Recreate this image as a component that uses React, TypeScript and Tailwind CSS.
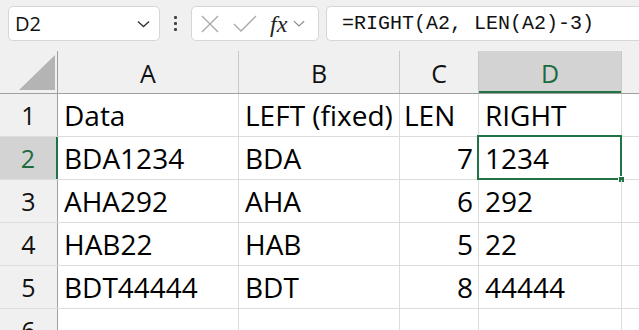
import React from 'react'

const cols = ['A', 'B', 'C', 'D']

const rows: { n: number; a: string; b: string; c: string; d: string }[] = [
  { n: 1, a: 'Data', b: 'LEFT (fixed)', c: 'LEN', d: 'RIGHT' },
  { n: 2, a: 'BDA1234', b: 'BDA', c: '7', d: '1234' },
  { n: 3, a: 'AHA292', b: 'AHA', c: '6', d: '292' },
  { n: 4, a: 'HAB22', b: 'HAB', c: '5', d: '22' },
  { n: 5, a: 'BDT44444', b: 'BDT', c: '8', d: '44444' },
  { n: 6, a: '', b: '', c: '', d: '' },
]

const colWidths = 'grid-cols-[58px_181px_161px_79px_143px_1fr]'

function Chevron({ className }: { className?: string }) {
  return (
    <svg viewBox="0 0 14 8" className={className} fill="none" stroke="currentColor" strokeWidth="1.4">
      <path d="M1 1.2 L7 6.8 L13 1.2" />
    </svg>
  )
}

function Toolbar() {
  return (
    <div className="h-[51px] flex items-start pt-[6px] bg-[#f0f0f0]">
      <div className="ml-[8px] w-[152px] h-[35px] bg-white border border-[#d6d6d6] rounded-[5px] flex items-center pl-[6px] pr-[9px]">
        <span className="text-[20px] text-[#111] leading-none">D2</span>
        <Chevron className="ml-auto w-[13px] h-[8px] text-[#333]" />
      </div>
      <div className="w-[31px] h-[35px] flex flex-col items-center justify-center gap-[3px]">
        <div className="w-[3px] h-[3px] bg-[#444] rounded-[1px]" />
        <div className="w-[3px] h-[3px] bg-[#444] rounded-[1px]" />
        <div className="w-[3px] h-[3px] bg-[#444] rounded-[1px]" />
      </div>
      <div className="w-[128px] h-[35px] bg-white border border-[#d6d6d6] rounded-[5px] flex items-center pl-[9px]">
        <svg viewBox="0 0 18 18" className="w-[18px] h-[18px] text-[#a8a8a8]" fill="none" stroke="currentColor" strokeWidth="1.3">
          <path d="M1 1 L17 17 M17 1 L1 17" />
        </svg>
        <svg viewBox="0 0 24 18" className="ml-[14px] w-[24px] h-[18px] text-[#a8a8a8]" fill="none" stroke="currentColor" strokeWidth="1.3">
          <path d="M1 9 L8 16 L23 1" />
        </svg>
        <span className="ml-[13px] text-[24px] italic text-[#222] leading-none" style={{ fontFamily: '"Liberation Serif", serif' }}>
          fx
        </span>
        <Chevron className="ml-[6px] w-[12px] h-[7px] text-[#888]" />
      </div>
      <div className="ml-[7px] flex-1 h-[35px] bg-white border border-[#d6d6d6] border-r-0 rounded-l-[5px] flex items-center pl-[15px]">
        <span className="text-[20px] text-[#111] leading-none" style={{ fontFamily: '"Liberation Mono", monospace' }}>
          =RIGHT(A2, LEN(A2)-3)
        </span>
      </div>
    </div>
  )
}

function HeaderRow() {
  return (
    <div className={`grid ${colWidths} h-[43px] bg-[#f0f0f0] border-b border-[#a0a0a0]`}>
      <div className="relative border-r border-[#a0a0a0]">
        <svg viewBox="0 0 36 36" className="absolute left-[19px] top-[4px] w-[36px] h-[36px]">
          <polygon points="36,0 36,35 0,35" fill="#b4b4b4" />
        </svg>
      </div>
      {cols.map((c) => {
        const sel = c === 'D'
        return (
          <div
            key={c}
            className={`flex items-center justify-center pt-[3px] text-[25px] border-r border-[#c8c8c8] ${
              sel ? 'bg-[#d3d3d3] text-[#1d6b40] shadow-[inset_0_-2px_0_#217346]' : 'text-[#111]'
            }`}
          >
            {c}
          </div>
        )
      })}
      <div />
    </div>
  )
}

export default function App() {
  return (
    <div className="w-[639px] h-[330px] overflow-hidden bg-white" style={{ fontFamily: '"Open Sans", "Noto Sans", sans-serif' }}>
      <Toolbar />
      <HeaderRow />
      {rows.map((r) => {
        const sel = r.n === 2
        return (
          <div key={r.n} className={`grid ${colWidths} h-[43px] border-b border-[#dcdcdc]`}>
            <div
              className={`flex items-center justify-center pt-[2px] text-[25px] ${
                sel
                  ? 'bg-[#d3d3d3] text-[#1d6b40] border-r-2 border-[#217346]'
                  : 'bg-[#f0f0f0] text-[#111] border-r border-[#a0a0a0]'
              }`}
            >
              {r.n}
            </div>
            <div className="flex items-center pl-[6px] text-[28px] text-black border-r border-[#dcdcdc] whitespace-nowrap">{r.a}</div>
            <div className="flex items-center pl-[6px] text-[28px] text-black border-r border-[#dcdcdc] whitespace-nowrap">{r.b}</div>
            <div className={`flex items-center pr-[5px] text-[28px] text-black border-r border-[#dcdcdc] whitespace-nowrap ${r.n === 1 ? 'justify-start pl-[4px]' : 'justify-end'}`}>
              {r.c}
            </div>
            <div className="relative flex items-center pl-[6px] text-[28px] text-black border-r border-[#dcdcdc] whitespace-nowrap">
              {r.d}
              {sel && (
                <>
                  <div className="absolute left-[-2px] top-[-2px] right-[-1px] bottom-[-1px] border-2 border-[#217346]" />
                  <div className="absolute right-[-4px] bottom-[-4px] w-[7px] h-[7px] bg-[#217346] border border-white" />
                </>
              )}
            </div>
            <div />
          </div>
        )
      })}
    </div>
  )
}
